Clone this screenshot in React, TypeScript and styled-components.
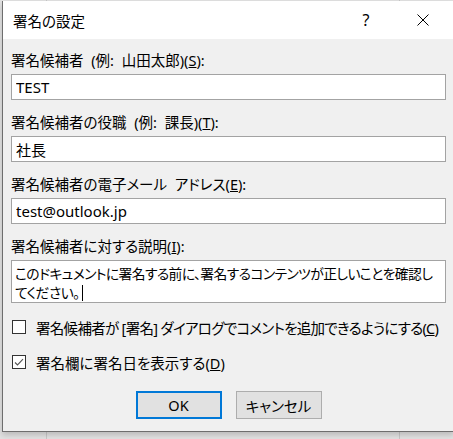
import React from "react"
import styled, { createGlobalStyle } from "styled-components"

const GlobalStyle = createGlobalStyle`
  html, body {
    margin: 0;
    padding: 0;
    overflow: hidden;
  }

  body {
    width: 453px;
    height: 439px;
    background-color: #e2e2e2;
    background-image:
      linear-gradient(to right, transparent 46px, #c8c8c8 46px, #c8c8c8 47px, transparent 47px),
      linear-gradient(to right, transparent 399px, #c8c8c8 399px, #c8c8c8 400px, transparent 400px);
    font-family: "Noto Sans", "Noto Sans CJK JP", sans-serif;
    font-feature-settings: "palt";
  }
`

const Page = styled.div`
  padding: 1px 0 0 2px;
`

const Window = styled.div`
  display: flex;
  flex-direction: column;

  width: 451px;
  height: 430px;

  border-left: 1px solid #6e6e6e;
  border-bottom: 1px solid #6e6e6e;
  background: #f0f0f0;
  box-shadow: 0 3px 6px rgba(0, 0, 0, 0.18);
`

const TitleBar = styled.header`
  display: flex;
  align-items: center;

  height: 38px;
  padding: 0 8px 0 10px;

  background: #ffffff;
`

const Title = styled.span`
  flex: 1;

  font-size: 14.5px;
  color: #000;
`

const CaptionButton = styled.button`
  display: flex;
  justify-content: center;
  align-items: center;

  width: 46px;
  height: 30px;
  padding: 0;

  border: none;
  background: transparent;

  font-family: "Noto Sans", sans-serif;
  font-size: 16px;
  color: #000;

  & + & {
    margin-left: 11px;
  }
`

const Body = styled.div`
  display: flex;
  flex-direction: column;

  padding: 11px 8px 0 8px;
`

const Field = styled.div`
  display: flex;
  flex-direction: column;
  gap: 4px;

  & + & {
    margin-top: 12px;
  }
`

const Label = styled.label`
  height: 20px;

  font-size: 14.5px;
  line-height: 20px;
  word-spacing: 4px;
  color: #000;
  white-space: nowrap;
`

const TextInput = styled.input`
  box-sizing: border-box;
  width: 100%;
  height: 26px;
  padding: 0 4px;

  border: 1px solid #a3a3a3;
  background: #fff;
  outline: none;

  font-family: inherit;
  font-feature-settings: "palt";
  font-size: 15px;
  color: #000;
`

const TextArea = styled.div`
  box-sizing: border-box;
  width: 100%;
  height: 43px;
  padding: 3px 2px 0 3px;

  border: 1px solid #a3a3a3;
  background: #fff;

  font-size: 13.8px;
  line-height: 19px;
  letter-spacing: -0.6px;
  color: #000;
`

const Caret = styled.span`
  display: inline-block;

  width: 1px;
  height: 16px;
  margin-left: 3px;

  background: #000;
  vertical-align: -3px;
`

const CheckList = styled.div`
  display: flex;
  flex-direction: column;
  gap: 15px;

  margin-top: 14px;
`

const CheckRow = styled.label<{ $tight?: boolean }>`
  display: flex;
  align-items: center;
  gap: 10px;

  height: 20px;
  padding-left: 1px;

  font-size: 14.5px;
  letter-spacing: ${({ $tight }) => ($tight ? "-0.7px" : "0")};
  color: #000;
  white-space: nowrap;
`

const Box = styled.span`
  display: flex;
  flex-shrink: 0;
  justify-content: center;
  align-items: center;

  box-sizing: border-box;
  width: 14px;
  height: 14px;

  border: 1px solid #333;
  background: #fff;
`

const ButtonRow = styled.div`
  display: flex;
  justify-content: center;
  gap: 14px;

  margin-top: 19px;
`

const DialogButton = styled.button<{ $primary?: boolean }>`
  box-sizing: border-box;
  width: 86px;
  height: 28px;
  padding: 0;

  border: ${({ $primary }) => ($primary ? "2px solid #0078d7" : "1px solid #adadad")};
  background: #e1e1e1;

  font-family: inherit;
  font-feature-settings: "palt";
  font-size: 14.5px;
  color: #000;
`

const CheckMark = () => (
  <svg width="10" height="9" viewBox="0 0 10 9">
    <polyline points="1,4.5 3.5,7 9,1.2" fill="none" stroke="#555" strokeWidth="1.1" />
  </svg>
)

const CloseIcon = () => (
  <svg width="12" height="12" viewBox="0 0 12 12">
    <path d="M0.5 0.5 L11.5 11.5 M11.5 0.5 L0.5 11.5" stroke="#000" strokeWidth="1" />
  </svg>
)

const Check = ({
  checked,
  tight,
  children,
}: {
  checked?: boolean
  tight?: boolean
  children: React.ReactNode
}) => (
  <CheckRow $tight={tight}>
    <Box>{checked && <CheckMark />}</Box>
    <span>{children}</span>
  </CheckRow>
)

export default function App() {
  return (
    <>
      <GlobalStyle />
      <Page>
        <Window>
          <TitleBar>
            <Title>署名の設定</Title>
            <CaptionButton>?</CaptionButton>
            <CaptionButton>
              <CloseIcon />
            </CaptionButton>
          </TitleBar>

          <Body>
            <Field>
              <Label>
                署名候補者 (例: 山田太郎)(<u>S</u>):
              </Label>
              <TextInput defaultValue="TEST" />
            </Field>

            <Field>
              <Label>
                署名候補者の役職 (例: 課長)(<u>T</u>):
              </Label>
              <TextInput defaultValue="社長" />
            </Field>

            <Field>
              <Label>
                署名候補者の電子メール アドレス(<u>E</u>):
              </Label>
              <TextInput defaultValue="test@outlook.jp" />
            </Field>

            <Field>
              <Label>
                署名候補者に対する説明(<u>I</u>):
              </Label>
              <TextArea role="textbox">
                このドキュメントに署名する前に、署名するコンテンツが正しいことを確認してください。
                <Caret />
              </TextArea>
            </Field>

            <CheckList>
              <Check tight>
                署名候補者が [署名] ダイアログでコメントを追加できるようにする(<u>C</u>)
              </Check>
              <Check checked>
                署名欄に署名日を表示する(<u>D</u>)
              </Check>
            </CheckList>

            <ButtonRow>
              <DialogButton $primary>OK</DialogButton>
              <DialogButton>キャンセル</DialogButton>
            </ButtonRow>
          </Body>
        </Window>
      </Page>
    </>
  )
}
